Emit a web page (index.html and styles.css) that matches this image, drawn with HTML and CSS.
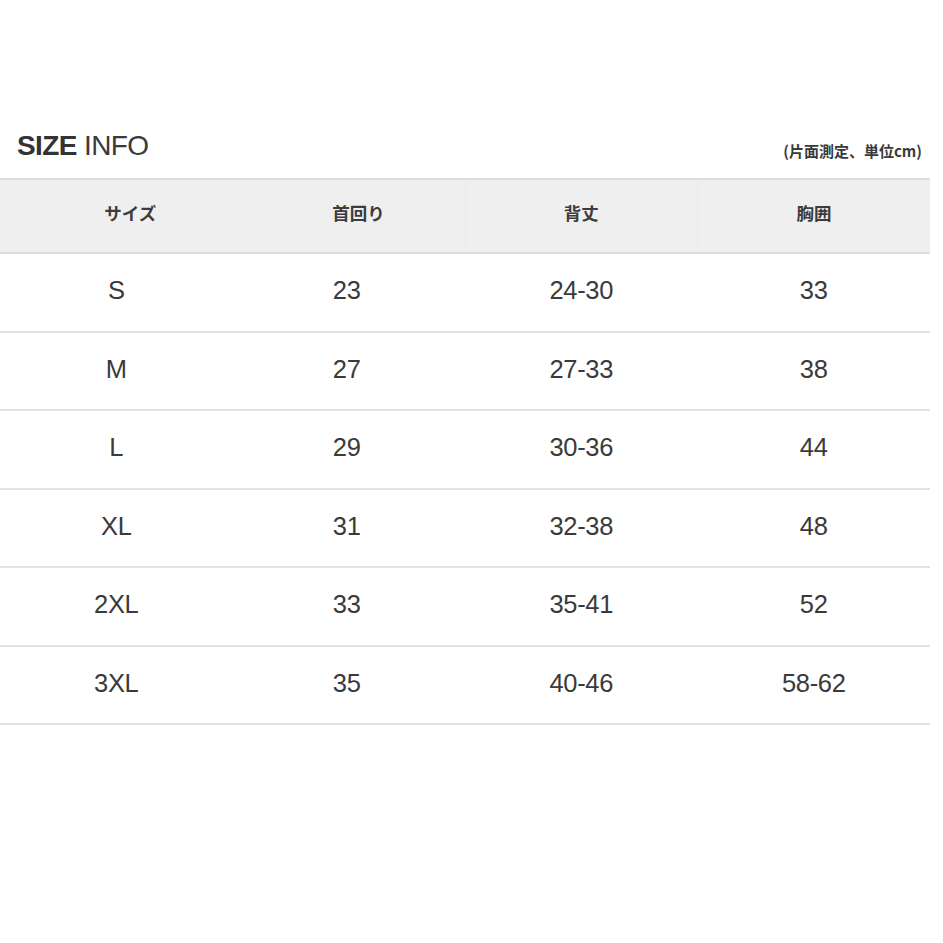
FILE: index.html
```html
<!DOCTYPE html>
<html lang="ja">
<head>
<meta charset="utf-8">
<title>SIZE INFO</title>
<link rel="stylesheet" href="styles.css">
</head>
<body>
<div class="page">
  <div class="head">
    <h1 class="title"><b>SIZE</b> INFO</h1>
    <span class="note">(片面測定、単位cm)</span>
  </div>
  <table class="size">
    <thead>
      <tr><th class="c1">サイズ</th><th class="c2">首回り</th><th class="c3">背丈</th><th class="c4">胸囲</th></tr>
    </thead>
    <tbody>
      <tr><td>S</td><td>23</td><td>24-30</td><td>33</td></tr>
      <tr><td>M</td><td>27</td><td>27-33</td><td>38</td></tr>
      <tr><td>L</td><td>29</td><td>30-36</td><td>44</td></tr>
      <tr><td>XL</td><td>31</td><td>32-38</td><td>48</td></tr>
      <tr><td>2XL</td><td>33</td><td>35-41</td><td>52</td></tr>
      <tr><td>3XL</td><td>35</td><td>40-46</td><td>58-62</td></tr>
    </tbody>
  </table>
</div>
</body>
</html>
```
FILE: styles.css
```css
html, body {
  margin: 0;
  padding: 0;
  background: #ffffff;
}
.page {
  width: 930px;
  padding-top: 130px;
  font-family: "Liberation Sans", Arial, "Noto Sans CJK JP", sans-serif;
  color: #363636;
}
.head {
  display: flex;
  justify-content: space-between;
  align-items: baseline;
  padding: 0 8px 0 17px;
  height: 48px;
}
.title {
  margin: 0;
  font-size: 28px;
  line-height: 32px;
  font-weight: 400;
  letter-spacing: -0.6px;
  color: #3a3a3a;
}
.title b {
  font-weight: 700;
  color: #333;
}
.note {
  font-family: "Noto Sans CJK JP", sans-serif;
  font-weight: 700;
  font-size: 15px;
  color: #3a3a3a;
  position: relative;
  top: 2px;
}
.size {
  width: 930px;
  border-collapse: collapse;
  table-layout: fixed;
}
.size th {
  height: 64px;
  padding: 0 0 8px;
  background: #efefef;
  border-top: 2px solid #dedede;
  border-bottom: 2px solid #dcdcdc;
  font-family: "Noto Sans CJK JP", sans-serif;
  font-weight: 700;
  font-size: 17.5px;
  color: #3c3c3c;
  text-align: center;
}
.size th.c1 {
  padding-left: 28px;
}
.size th.c2 {
  padding-left: 20px;
}
.size th.c3,
.size th.c4 {
  border-left: 1px solid #e8e8e8;
}
.size td {
  height: 73.5px;
  padding: 0 0 3px;
  border-bottom: 2px solid #e2e2e2;
  text-align: center;
  font-size: 25.5px;
  letter-spacing: -0.3px;
  color: #3a3a3a;
}
.size td:nth-child(2) {
  padding-right: 4px;
}
```
